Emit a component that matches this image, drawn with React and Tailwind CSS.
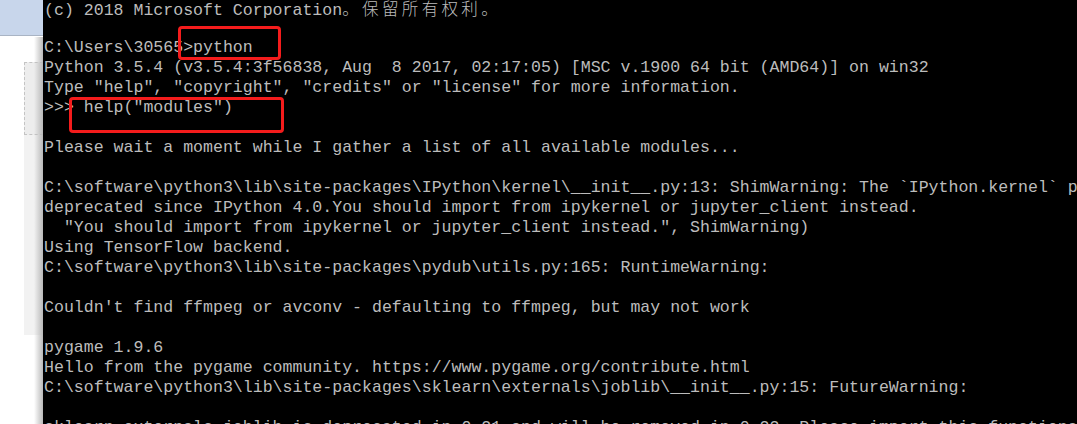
import React from "react";

const lines = [
  "(c) 2018 Microsoft Corporation",
  "",
  String.raw`C:\Users\30565>python`,
  "Python 3.5.4 (v3.5.4:3f56838, Aug  8 2017, 02:17:05) [MSC v.1900 64 bit (AMD64)] on win32",
  'Type "help", "copyright", "credits" or "license" for more information.',
  '>>> help("modules")',
  "",
  "Please wait a moment while I gather a list of all available modules...",
  "",
  String.raw`C:\software\python3\lib\site-packages\IPython\kernel\__init__.py:13: ShimWarning: The ` + "`IPython.kernel` package has been",
  "deprecated since IPython 4.0.You should import from ipykernel or jupyter_client instead.",
  '  "You should import from ipykernel or jupyter_client instead.", ShimWarning)',
  "Using TensorFlow backend.",
  String.raw`C:\software\python3\lib\site-packages\pydub\utils.py:165: RuntimeWarning:`,
  "",
  "Couldn't find ffmpeg or avconv - defaulting to ffmpeg, but may not work",
  "",
  "pygame 1.9.6",
  "Hello from the pygame community. https://www.pygame.org/contribute.html",
  String.raw`C:\software\python3\lib\site-packages\sklearn\externals\joblib\__init__.py:15: FutureWarning:`,
  "",
  "sklearn.externals.joblib is deprecated in 0.21 and will be removed in 0.23. Please import this functionality directly from joblib",
];

export default function App() {
  return (
    <div className="flex w-[1077px] h-[424px] overflow-hidden bg-white">
      {/* left window strip */}
      <div className="relative flex flex-col w-[43px] shrink-0">
        <div className="h-[36px] bg-[#c8d6eb] border-b border-[#a9b4c4]" />
        <div className="flex flex-col flex-1 bg-white">
          <div className="h-[26px]" />
          <div className="ml-[24px] h-[73px] bg-[#ededed] border border-dashed border-[#c4c4c4] border-r-0" />
          <div className="ml-[24px] h-[200px] bg-[#f2f2f2]" />
        </div>
        <div className="absolute right-0 top-[37px] bottom-0 w-[9px] bg-gradient-to-r from-transparent to-[#b9b9b9]" />
      </div>

      {/* console */}
      <div className="relative flex-1 bg-black text-[#bcbcbc] overflow-hidden">
        <div className="mt-[-2px] pl-[1px] whitespace-pre text-[16.57px] leading-[20px] font-['Liberation_Mono','Noto_Sans_CJK_SC',monospace]">
          {lines.map((l, i) => (
            <div key={i} className="h-[20px]">
              {l}
              {i === 0 && (
                <span className="tracking-[3.3px] font-['Noto_Sans_CJK_SC',sans-serif] font-light">。保留所有权利。</span>
              )}
            </div>
          ))}
        </div>
        <div className="absolute left-[135px] top-[26px] w-[103px] h-[34px] border-[3px] border-[#f41c1c] rounded-[4px]" />
        <div className="absolute left-[26px] top-[97px] w-[215px] h-[36px] border-[3px] border-[#f41c1c] rounded-[4px]" />
      </div>
    </div>
  );
}
